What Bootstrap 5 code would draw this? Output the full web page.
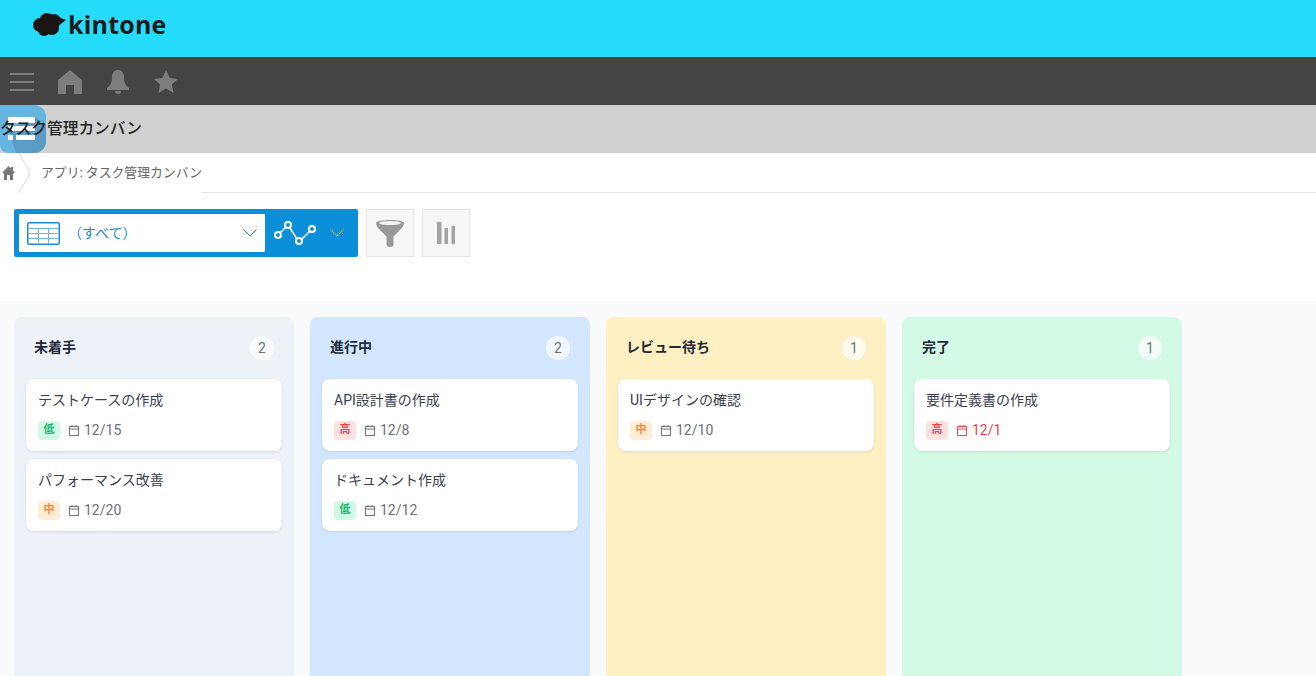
<!DOCTYPE html>
<html lang="ja">
<head>
<meta charset="UTF-8" />
<title>タスク管理カンバン</title>
<link rel="stylesheet" href="https://cdn.jsdelivr.net/npm/bootstrap@5.3.0/dist/css/bootstrap.min.css" />
<style>
  html, body { height: 676px; overflow: hidden; }
  body { font-family: Roboto, "Noto Sans CJK JP", sans-serif; color: #333; background: #fff; }
  .logo-bar { height: 57px; background: #25dcfc; padding: 0 0 8px 33px; }
  .logo-word { font-family: "Open Sans", sans-serif; font-weight: 700; font-size: 25px; line-height: 1; color: #1a1a1a; margin-left: 2px; letter-spacing: .2px; }
  .dark-bar { height: 48px; background: #444; border-top: 1px solid #333; padding-left: 10px; gap: 24px; }
  .nudge-1 { margin-left: 1px; }
  .title-bar { height: 48px; background: #cfd0cf; position: relative; }
  .app-icon { position: absolute; left: 0; top: 0; width: 46px; height: 48px; }
  .app-title { position: relative; font-size: 15.7px; font-weight: 500; color: #222; line-height: 48px; }
  .crumb-bar { height: 40px; position: relative; padding-left: 2px; }
  .crumb-line { position: absolute; left: 202px; right: 0; bottom: 0; height: 1px; background: #e3e7e8; }
  .crumb-sep { margin-left: 3px; }
  .crumb-text { font-size: 12.85px; color: #666; margin-left: 9px; }
  .tool-bar { height: 108px; padding: 16px 14px 0; gap: 8px; }
  .view-box { width: 344px; height: 48px; background: #0a8fd8; border-radius: 2px; padding: 5px 0 5px 5px; }
  .view-select { width: 246px; background: #fff; height: 38px; color: #1a8cd8; font-size: 14px; padding: 0 8px; }
  .view-name { margin-left: 8px; padding-top: 1px; }
  .graph-btn { flex: 1; padding-left: 9px; gap: 14px; }
  .icon-btn { width: 48px; height: 48px; background: #f5f6f6; border: 1px solid #e3e7e8; }
  .board { height: 375px; background: #f8fafc; padding: 16px 14px 0; gap: 16px; overflow: hidden; }
  .lane { width: 280px; height: 359px; border-radius: 8px 8px 0 0; padding: 0 12px; flex: none; }
  .lane-todo { background: #edf2f9; }
  .lane-doing { background: #d2e7fd; }
  .lane-review { background: #fef0c2; }
  .lane-done { background: #d2fae5; }
  .lane-head { height: 62px; padding: 0 8px; }
  .lane-name { font-size: 14px; font-weight: 700; color: #1f2937; padding-bottom: 1px; }
  .lane-count { width: 24px; height: 24px; border-radius: 50%; background: rgba(255,255,255,.7); font-size: 14px; color: #6b7280; }
  .task { height: 72px; background: #fff; border-radius: 8px; padding: 11px 12px 0; margin-bottom: 8px; box-shadow: 0 1px 3px rgba(0,0,0,.1); }
  .task-name { font-size: 14px; line-height: 20px; color: #374151; margin-bottom: 10px; }
  .pri { width: 22px; height: 19px; border-radius: 4px; font-size: 11px; font-weight: 700; }
  .pri-low { background: #d1fae5; color: #22b573; }
  .pri-mid { background: #ffedd5; color: #f98a2c; }
  .pri-high { background: #fee2e2; color: #ef4444; }
  .due { font-size: 14px; color: #6b7280; gap: 5px; margin-left: 9px; }
  .due-over { color: #ef4444; }
</style>
</head>
<body>
  <div class="logo-bar d-flex align-items-center">
    <svg width="33" height="23" viewBox="0 0 33 23">
      <g fill="#1d1414">
        <circle cx="7" cy="12" r="7" /><circle cx="14" cy="7.500" r="7.500" /><circle cx="21" cy="8" r="7" /><circle cx="19" cy="15" r="7" /><circle cx="11" cy="17" r="6" />
        <path d="M20 2l13 5-8 6z" />
      </g>
    </svg>
    <span class="logo-word">kintone</span>
  </div>

  <div class="dark-bar d-flex align-items-center">
    <svg width="24" height="20" viewBox="0 0 24 20"><path stroke="#7d7d7d" stroke-width="2" d="M0 2h24M0 10h24M0 18h24" /></svg>
    <svg width="24" height="24" viewBox="0 0 24 24"><path fill="#7d7d7d" d="M12 0 24 10v14h-8v-9H8v9H0V10z" /></svg>
    <svg class="nudge-1" width="22" height="24" viewBox="0 0 22 24"><path fill="#7d7d7d" d="M11 0c4 0 6 3 6 7 0 5 1 8 5 11v2H0v-2c4-3 5-6 5-11 0-4 2-7 6-7zM8 21h6c0 2-1 3-3 3s-3-1-3-3z" /></svg>
    <svg class="nudge-1" width="24" height="24" viewBox="0 0 24 24"><path fill="#7d7d7d" d="M12 0l3.700 8 8.300.9-6.200 5.600 1.800 8.500L12 18.600 4.400 23l1.800-8.500L0 8.900 8.300 8z" /></svg>
  </div>

  <div class="title-bar">
    <svg class="app-icon" viewBox="0 0 46 48">
      <path fill="#66b5e0" d="M0 0h34a12 12 0 0 1 12 12v24a12 12 0 0 1-12 12H8a8 8 0 0 1-8-8z" />
      <path fill="#5a9cc4" d="M8 24 35 12l11 8v16a12 12 0 0 1-12 12H16z" />
      <path fill="#fff" d="M8 12h27v6H8zM8 21h27v5H8zM8 30h5v5H8zM16 30h19v5H16z" />
    </svg>
    <div class="app-title">タスク管理カンバン</div>
  </div>

  <div class="crumb-bar d-flex align-items-center">
    <svg width="13" height="14" viewBox="0 0 13 14"><path fill="#777" d="M6.500 0 9 2.500V1h2v3.500L13 7h-2v7H8V9H5v5H2V7H0z" /></svg>
    <svg class="crumb-sep" width="14" height="40" viewBox="0 0 14 40"><path fill="none" stroke="#dcdcdc" d="M1 0l11 20L1 40" /></svg>
    <span class="crumb-text">アプリ: タスク管理カンバン</span>
    <div class="crumb-line"></div>
  </div>

  <div class="tool-bar d-flex align-items-start">
    <div class="view-box d-flex">
      <div class="view-select d-flex align-items-center">
        <svg width="33" height="23" viewBox="0 0 33 23"><rect x=".75" y=".75" width="31.500" height="21.500" rx="1.500" fill="#fff" stroke="#1a8cd8" stroke-width="1.500" /><path stroke="#6cb4e4" d="M1 6.500h31M1 11.500h31M1 16.500h31M11.500 6v16M21.500 6v16" /></svg>
        <span class="view-name flex-grow-1">（すべて）</span>
        <svg width="14" height="8" viewBox="0 0 14 8"><path fill="none" stroke="#1a8cd8" d="M.5.5 7 7l6.500-6.500" /></svg>
      </div>
      <div class="graph-btn d-flex align-items-center">
        <svg width="42" height="26" viewBox="0 0 42 26"><path fill="none" stroke="#fff" stroke-width="1.500" d="M4 15 14 5l11 17 13-13" /><g fill="#0a8fd8" stroke="#fff" stroke-width="2"><circle cx="4" cy="15" r="3" /><circle cx="14" cy="5" r="3" /><circle cx="25" cy="21" r="3" /><circle cx="38" cy="9" r="3" /></g></svg>
        <svg width="14" height="8" viewBox="0 0 14 8"><path fill="none" stroke="#fff" d="M.5.5 7 7l6.500-6.500" /></svg>
      </div>
    </div>
    <div class="icon-btn d-flex align-items-center justify-content-center">
      <svg width="28" height="28" viewBox="0 0 28 28"><path fill="#999" d="M0 4C0 0 28 0 28 4c0 3-3 6-5 8l-5.500 5.500V26c0 2.500-7 2.500-7 0v-8.500L5 12C3 10 0 7 0 4z" /><ellipse cx="14" cy="4" rx="11" ry="2" fill="#f3f3f3" /></svg>
    </div>
    <div class="icon-btn d-flex align-items-center justify-content-center">
      <svg width="18" height="22" viewBox="0 0 18 22"><path fill="#a3a3a3" d="M0 0h4.500v22H0zM7.500 6H11v16H7.500zM14.500 4H18v18h-3.500z" /></svg>
    </div>
  </div>

  <div class="board d-flex" id="board"></div>

  <script>
    const lanes = [
      { cls: "lane-todo", name: "未着手", tasks: [["テストケースの作成", "low", "12/15"], ["パフォーマンス改善", "mid", "12/20"]] },
      { cls: "lane-doing", name: "進行中", tasks: [["API設計書の作成", "high", "12/8"], ["ドキュメント作成", "low", "12/12"]] },
      { cls: "lane-review", name: "レビュー待ち", tasks: [["UIデザインの確認", "mid", "12/10"]] },
      { cls: "lane-done", name: "完了", tasks: [["要件定義書の作成", "high", "12/1", true]] },
    ];
    const priLabel = { low: "低", mid: "中", high: "高" };

    function calIcon() {
      return '<svg width="10" height="11" viewBox="0 0 10 11"><path fill="none" stroke="currentColor" d="M.5 1.500h9v9h-9zM.5 4h9M3 0v2M7 0v2" /></svg>';
    }

    document.getElementById("board").innerHTML = lanes.map((lane) => `
      <div class="lane ${lane.cls}">
        <div class="lane-head d-flex align-items-center justify-content-between">
          <span class="lane-name">${lane.name}</span>
          <span class="lane-count d-flex align-items-center justify-content-center">${lane.tasks.length}</span>
        </div>
        ${lane.tasks.map((t) => `
          <div class="task">
            <div class="task-name">${t[0]}</div>
            <div class="d-flex align-items-center">
              <span class="pri pri-${t[1]} d-flex align-items-center justify-content-center">${priLabel[t[1]]}</span>
              <span class="due d-flex align-items-center ${t[3] ? "due-over" : ""}">${calIcon()}${t[2]}</span>
            </div>
          </div>`).join("")}
      </div>`).join("");
  </script>
  <script src="https://cdn.jsdelivr.net/npm/bootstrap@5.3.0/dist/js/bootstrap.bundle.min.js"></script>
</body>
</html>
